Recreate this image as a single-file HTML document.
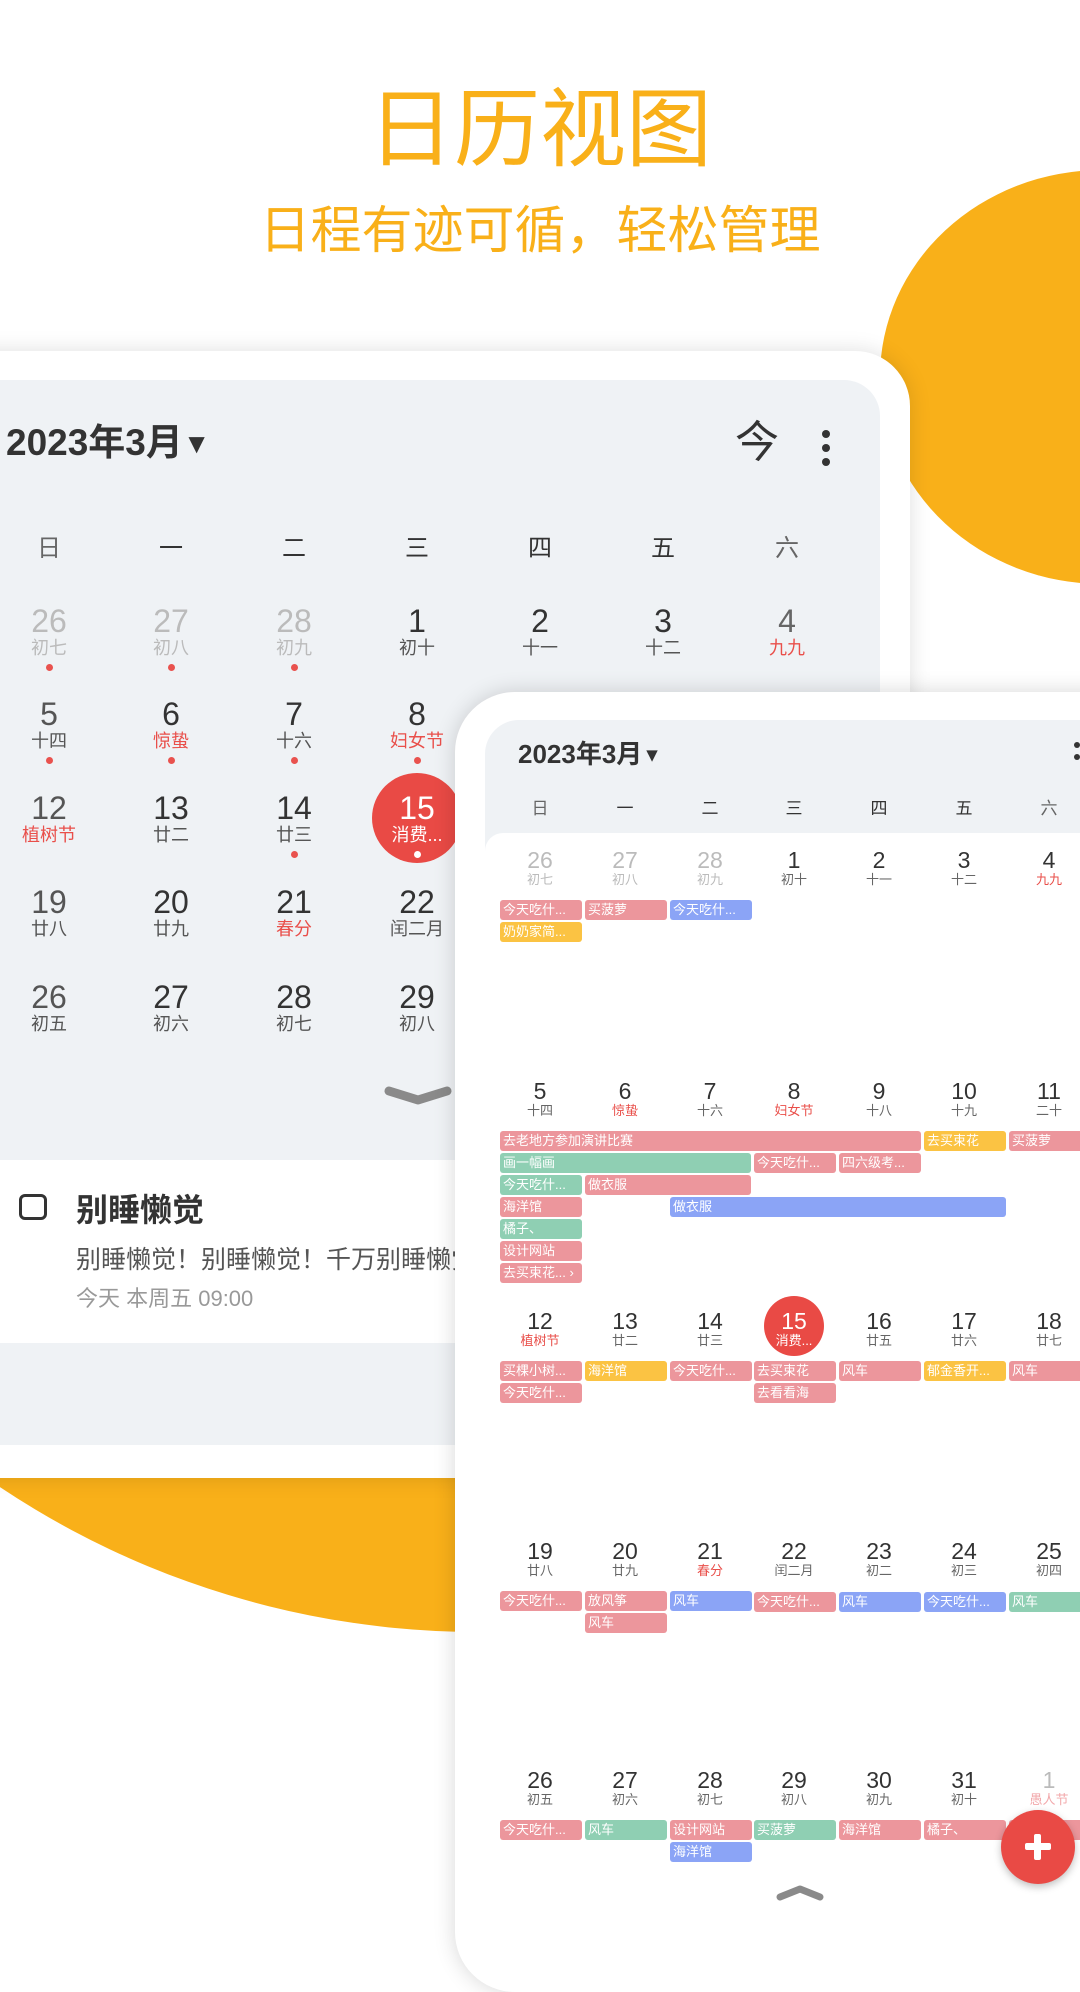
<!DOCTYPE html>
<html><head><meta charset="utf-8">
<style>
*{margin:0;padding:0;box-sizing:border-box}
body{width:1080px;height:1920px;position:relative;overflow:hidden;background:#fff;font-family:"Liberation Sans","Noto Sans CJK SC",sans-serif}
.a{position:absolute}
.t{position:absolute;text-align:center;white-space:nowrap}
.n1{font-size:32px;line-height:36px;width:120px;color:#333}
.l1{font-size:18px;line-height:22px;width:120px;color:#555}
.d1{width:7px;height:7px;border-radius:50%;background:#E9524E;position:absolute}
.w1{font-size:24px;line-height:30px;width:120px;color:#333}
.n2{font-size:23px;line-height:28px;width:84px;color:#333}
.l2{font-size:13px;line-height:16px;width:84px;color:#666}
.w2{font-size:17px;line-height:22px;width:84px;color:#333}
.g{color:#bbb!important}
.r{color:#E94F4A!important}
.b{position:absolute;height:20px;border-radius:3px;color:#fff;font-size:13px;line-height:20px;padding-left:3px;white-space:nowrap;overflow:hidden}
.p{background:#EC969C}.bl{background:#8BA4F6}.gr{background:#8FCFB3}.y{background:#FBC343}
.tri{font-size:0.75em;vertical-align:0.08em}
</style></head><body>

<div class="a" style="left:880px;top:170px;width:444px;height:414px;border-radius:50%;background:#F9B019"></div>
<div class="a" style="left:0;top:1470px;width:470px;height:200px;overflow:hidden">
 <div class="a" style="left:-383px;top:-1560px;width:1722px;height:1722px;border-radius:50%;background:#F9B019"></div>
</div>

<div class="t" style="left:0;width:1080px;top:80px;font-size:86px;line-height:100px;color:#F9B019">日历视图</div>
<div class="t" style="left:0;width:1080px;top:200px;font-size:51px;line-height:62px;color:#F9B019">日程有迹可循，轻松管理</div>

<!-- phone 1 -->
<div class="a" style="left:-60px;top:351px;width:970px;height:1127px;background:#fff;border-radius:0 55px 40px 0;box-shadow:0 0 22px rgba(0,0,0,.13)"></div>
<div class="a" style="left:-40px;top:380px;width:920px;height:1065px;background:#EFF2F5;border-radius:36px"></div>
<div class="a" style="left:6px;top:420px;font-size:37px;font-weight:bold;line-height:46px;color:#333">2023年3月<span class="tri">▼</span></div>
<div class="a" style="left:735px;top:418px;font-size:44px;line-height:50px;color:#333">今</div>
<div class="a" style="left:822px;top:430px;width:8px;height:8px;border-radius:50%;background:#333"></div>
<div class="a" style="left:822px;top:444px;width:8px;height:8px;border-radius:50%;background:#333"></div>
<div class="a" style="left:822px;top:458px;width:8px;height:8px;border-radius:50%;background:#333"></div>

<div class="t w1" style="left:-11px;top:534px;color:#666">日</div>
<div class="t w1" style="left:111px;top:534px">一</div>
<div class="t w1" style="left:234px;top:534px">二</div>
<div class="t w1" style="left:357px;top:534px">三</div>
<div class="t w1" style="left:480px;top:534px">四</div>
<div class="t w1" style="left:603px;top:534px">五</div>
<div class="t w1" style="left:727px;top:534px;color:#666">六</div>

<div class="t n1 g" style="left:-11px;top:603px">26</div><div class="t l1 g" style="left:-11px;top:637px">初七</div><div class="d1" style="left:46px;top:664px"></div>
<div class="t n1 g" style="left:111px;top:603px">27</div><div class="t l1 g" style="left:111px;top:637px">初八</div><div class="d1" style="left:168px;top:664px"></div>
<div class="t n1 g" style="left:234px;top:603px">28</div><div class="t l1 g" style="left:234px;top:637px">初九</div><div class="d1" style="left:291px;top:664px"></div>
<div class="t n1" style="left:357px;top:603px">1</div><div class="t l1" style="left:357px;top:637px">初十</div>
<div class="t n1" style="left:480px;top:603px">2</div><div class="t l1" style="left:480px;top:637px">十一</div>
<div class="t n1" style="left:603px;top:603px">3</div><div class="t l1" style="left:603px;top:637px">十二</div>
<div class="t n1" style="left:727px;top:603px;color:#666">4</div><div class="t l1 r" style="left:727px;top:637px">九九</div>
<div class="t n1" style="left:-11px;top:696px;color:#555">5</div><div class="t l1" style="left:-11px;top:730px">十四</div><div class="d1" style="left:46px;top:757px"></div>
<div class="t n1" style="left:111px;top:696px">6</div><div class="t l1 r" style="left:111px;top:730px">惊蛰</div><div class="d1" style="left:168px;top:757px"></div>
<div class="t n1" style="left:234px;top:696px">7</div><div class="t l1" style="left:234px;top:730px">十六</div><div class="d1" style="left:291px;top:757px"></div>
<div class="t n1" style="left:357px;top:696px">8</div><div class="t l1 r" style="left:357px;top:730px">妇女节</div><div class="d1" style="left:414px;top:757px"></div>
<div class="t n1" style="left:-11px;top:790px;color:#555">12</div><div class="t l1 r" style="left:-11px;top:824px">植树节</div>
<div class="t n1" style="left:111px;top:790px">13</div><div class="t l1" style="left:111px;top:824px">廿二</div>
<div class="t n1" style="left:234px;top:790px">14</div><div class="t l1" style="left:234px;top:824px">廿三</div><div class="d1" style="left:291px;top:851px"></div>
<div class="a" style="left:372px;top:773px;width:90px;height:90px;border-radius:50%;background:#E94A45"></div>
<div class="t n1" style="left:357px;top:790px;color:#fff">15</div><div class="t l1" style="left:357px;top:824px;color:#fff">消费...</div><div class="d1" style="left:414px;top:851px;background:#fff"></div>
<div class="t n1" style="left:-11px;top:884px;color:#555">19</div><div class="t l1" style="left:-11px;top:918px">廿八</div>
<div class="t n1" style="left:111px;top:884px">20</div><div class="t l1" style="left:111px;top:918px">廿九</div>
<div class="t n1" style="left:234px;top:884px">21</div><div class="t l1 r" style="left:234px;top:918px">春分</div>
<div class="t n1" style="left:357px;top:884px">22</div><div class="t l1" style="left:357px;top:918px">闰二月</div>
<div class="t n1" style="left:-11px;top:979px;color:#555">26</div><div class="t l1" style="left:-11px;top:1013px">初五</div>
<div class="t n1" style="left:111px;top:979px">27</div><div class="t l1" style="left:111px;top:1013px">初六</div>
<div class="t n1" style="left:234px;top:979px">28</div><div class="t l1" style="left:234px;top:1013px">初七</div>
<div class="t n1" style="left:357px;top:979px">29</div><div class="t l1" style="left:357px;top:1013px">初八</div>
<svg class="a" style="left:383px;top:1085px" width="70" height="24"><path d="M6 6 L35 15 L64 6" stroke="#8a8a8a" stroke-width="9" fill="none" stroke-linecap="round" stroke-linejoin="round"/></svg>

<div class="a" style="left:-30px;top:1160px;width:520px;height:183px;background:#fff;border-radius:28px"></div>
<div class="a" style="left:19px;top:1194px;width:28px;height:26px;border:3px solid #333;border-radius:6px"></div>
<div class="a" style="left:76px;top:1190px;font-size:32px;font-weight:bold;line-height:40px;color:#333">别睡懒觉</div>
<div class="a" style="left:76px;top:1244px;font-size:25px;line-height:32px;color:#555;white-space:nowrap">别睡懒觉！别睡懒觉！千万别睡懒觉</div>
<div class="a" style="left:76px;top:1285px;font-size:22px;line-height:28px;color:#999">今天 本周五 09:00</div>

<!-- phone 2 -->
<div class="a" style="left:455px;top:692px;width:700px;height:1300px;background:#fff;border-radius:60px;box-shadow:0 0 22px rgba(0,0,0,.16)"></div>
<div class="a" style="left:485px;top:720px;width:650px;height:160px;background:#EFF2F5;border-radius:34px 0 0 0"></div>
<div class="a" style="left:485px;top:833px;width:640px;height:1100px;background:#fff;border-radius:18px 0 0 0"></div>
<div class="a" style="left:518px;top:738px;font-size:26px;font-weight:bold;line-height:32px;color:#333">2023年3月<span class="tri">▼</span></div>
<div class="a" style="left:1074px;top:742px;width:6px;height:6px;border-radius:50%;background:#333"></div>
<div class="a" style="left:1074px;top:754px;width:6px;height:6px;border-radius:50%;background:#333"></div>

<div class="t w2" style="left:498px;top:798px;color:#666">日</div>
<div class="t w2" style="left:583px;top:798px">一</div>
<div class="t w2" style="left:668px;top:798px">二</div>
<div class="t w2" style="left:752px;top:798px">三</div>
<div class="t w2" style="left:837px;top:798px">四</div>
<div class="t w2" style="left:922px;top:798px">五</div>
<div class="t w2" style="left:1007px;top:798px;color:#666">六</div>

<div class="t n2 g" style="left:498px;top:846px">26</div><div class="t l2 g" style="left:498px;top:872px">初七</div>
<div class="t n2 g" style="left:583px;top:846px">27</div><div class="t l2 g" style="left:583px;top:872px">初八</div>
<div class="t n2 g" style="left:668px;top:846px">28</div><div class="t l2 g" style="left:668px;top:872px">初九</div>
<div class="t n2" style="left:752px;top:846px">1</div><div class="t l2" style="left:752px;top:872px">初十</div>
<div class="t n2" style="left:837px;top:846px">2</div><div class="t l2" style="left:837px;top:872px">十一</div>
<div class="t n2" style="left:922px;top:846px">3</div><div class="t l2" style="left:922px;top:872px">十二</div>
<div class="t n2" style="left:1007px;top:846px">4</div><div class="t l2 r" style="left:1007px;top:872px">九九</div>
<div class="b p" style="left:500px;top:900px;width:82px">今天吃什...</div>
<div class="b p" style="left:585px;top:900px;width:82px">买菠萝</div>
<div class="b bl" style="left:670px;top:900px;width:82px">今天吃什...</div>
<div class="b y" style="left:500px;top:922px;width:82px">奶奶家简...</div>

<div class="t n2" style="left:498px;top:1077px">5</div><div class="t l2" style="left:498px;top:1103px">十四</div>
<div class="t n2" style="left:583px;top:1077px">6</div><div class="t l2 r" style="left:583px;top:1103px">惊蛰</div>
<div class="t n2" style="left:668px;top:1077px">7</div><div class="t l2" style="left:668px;top:1103px">十六</div>
<div class="t n2" style="left:752px;top:1077px">8</div><div class="t l2 r" style="left:752px;top:1103px">妇女节</div>
<div class="t n2" style="left:837px;top:1077px">9</div><div class="t l2" style="left:837px;top:1103px">十八</div>
<div class="t n2" style="left:922px;top:1077px">10</div><div class="t l2" style="left:922px;top:1103px">十九</div>
<div class="t n2" style="left:1007px;top:1077px">11</div><div class="t l2" style="left:1007px;top:1103px">二十</div>
<div class="b p" style="left:500px;top:1131px;width:421px">去老地方参加演讲比赛</div>
<div class="b y" style="left:924px;top:1131px;width:82px">去买束花</div>
<div class="b p" style="left:1009px;top:1131px;width:82px">买菠萝</div>
<div class="b gr" style="left:500px;top:1153px;width:251px">画一幅画</div>
<div class="b p" style="left:754px;top:1153px;width:82px">今天吃什...</div>
<div class="b p" style="left:839px;top:1153px;width:82px">四六级考...</div>
<div class="b gr" style="left:500px;top:1175px;width:82px">今天吃什...</div>
<div class="b p" style="left:585px;top:1175px;width:166px">做衣服</div>
<div class="b p" style="left:500px;top:1197px;width:82px">海洋馆</div>
<div class="b bl" style="left:670px;top:1197px;width:336px">做衣服</div>
<div class="b gr" style="left:500px;top:1219px;width:82px">橘子、</div>
<div class="b p" style="left:500px;top:1241px;width:82px">设计网站</div>
<div class="b p" style="left:500px;top:1263px;width:82px">去买束花... ›</div>

<div class="t n2" style="left:498px;top:1307px">12</div><div class="t l2 r" style="left:498px;top:1333px">植树节</div>
<div class="t n2" style="left:583px;top:1307px">13</div><div class="t l2" style="left:583px;top:1333px">廿二</div>
<div class="t n2" style="left:668px;top:1307px">14</div><div class="t l2" style="left:668px;top:1333px">廿三</div>
<div class="a" style="left:764px;top:1296px;width:60px;height:60px;border-radius:50%;background:#E94A45"></div>
<div class="t n2" style="left:752px;top:1307px;color:#fff">15</div><div class="t l2" style="left:752px;top:1333px;color:#fff">消费...</div>
<div class="t n2" style="left:837px;top:1307px">16</div><div class="t l2" style="left:837px;top:1333px">廿五</div>
<div class="t n2" style="left:922px;top:1307px">17</div><div class="t l2" style="left:922px;top:1333px">廿六</div>
<div class="t n2" style="left:1007px;top:1307px">18</div><div class="t l2" style="left:1007px;top:1333px">廿七</div>
<div class="b p" style="left:500px;top:1361px;width:82px">买棵小树...</div>
<div class="b y" style="left:585px;top:1361px;width:82px">海洋馆</div>
<div class="b p" style="left:670px;top:1361px;width:82px">今天吃什...</div>
<div class="b p" style="left:754px;top:1361px;width:82px">去买束花</div>
<div class="b p" style="left:839px;top:1361px;width:82px">风车</div>
<div class="b y" style="left:924px;top:1361px;width:82px">郁金香开...</div>
<div class="b p" style="left:1009px;top:1361px;width:82px">风车</div>
<div class="b p" style="left:500px;top:1383px;width:82px">今天吃什...</div>
<div class="b p" style="left:754px;top:1383px;width:82px">去看看海</div>

<div class="t n2" style="left:498px;top:1537px">19</div><div class="t l2" style="left:498px;top:1563px">廿八</div>
<div class="t n2" style="left:583px;top:1537px">20</div><div class="t l2" style="left:583px;top:1563px">廿九</div>
<div class="t n2" style="left:668px;top:1537px">21</div><div class="t l2 r" style="left:668px;top:1563px">春分</div>
<div class="t n2" style="left:752px;top:1537px">22</div><div class="t l2" style="left:752px;top:1563px">闰二月</div>
<div class="t n2" style="left:837px;top:1537px">23</div><div class="t l2" style="left:837px;top:1563px">初二</div>
<div class="t n2" style="left:922px;top:1537px">24</div><div class="t l2" style="left:922px;top:1563px">初三</div>
<div class="t n2" style="left:1007px;top:1537px">25</div><div class="t l2" style="left:1007px;top:1563px">初四</div>
<div class="b p" style="left:500px;top:1591px;width:82px">今天吃什...</div>
<div class="b p" style="left:585px;top:1591px;width:82px">放风筝</div>
<div class="b bl" style="left:670px;top:1591px;width:82px">风车</div>
<div class="b p" style="left:754px;top:1592px;width:82px">今天吃什...</div>
<div class="b bl" style="left:839px;top:1592px;width:82px">风车</div>
<div class="b bl" style="left:924px;top:1592px;width:82px">今天吃什...</div>
<div class="b gr" style="left:1009px;top:1592px;width:82px">风车</div>
<div class="b p" style="left:585px;top:1613px;width:82px">风车</div>

<div class="t n2" style="left:498px;top:1766px">26</div><div class="t l2" style="left:498px;top:1792px">初五</div>
<div class="t n2" style="left:583px;top:1766px">27</div><div class="t l2" style="left:583px;top:1792px">初六</div>
<div class="t n2" style="left:668px;top:1766px">28</div><div class="t l2" style="left:668px;top:1792px">初七</div>
<div class="t n2" style="left:752px;top:1766px">29</div><div class="t l2" style="left:752px;top:1792px">初八</div>
<div class="t n2" style="left:837px;top:1766px">30</div><div class="t l2" style="left:837px;top:1792px">初九</div>
<div class="t n2" style="left:922px;top:1766px">31</div><div class="t l2" style="left:922px;top:1792px">初十</div>
<div class="t n2 g" style="left:1007px;top:1766px">1</div><div class="t l2" style="left:1007px;top:1792px;color:#F2A8AB">愚人节</div>
<div class="b p" style="left:500px;top:1820px;width:82px">今天吃什...</div>
<div class="b gr" style="left:585px;top:1820px;width:82px">风车</div>
<div class="b p" style="left:670px;top:1820px;width:82px">设计网站</div>
<div class="b gr" style="left:754px;top:1820px;width:82px">买菠萝</div>
<div class="b p" style="left:839px;top:1820px;width:82px">海洋馆</div>
<div class="b p" style="left:924px;top:1820px;width:82px">橘子、</div>
<div class="b p" style="left:1009px;top:1820px;width:82px"></div>
<div class="b bl" style="left:670px;top:1842px;width:82px">海洋馆</div>

<div class="a" style="left:1001px;top:1810px;width:74px;height:74px;border-radius:50%;background:#E94A45;box-shadow:0 3px 8px rgba(0,0,0,.25)"></div>
<div class="a" style="left:1025px;top:1843px;width:26px;height:7px;background:#fff;border-radius:2px"></div>
<div class="a" style="left:1034px;top:1834px;width:7px;height:26px;background:#fff;border-radius:2px"></div>
<svg class="a" style="left:775px;top:1882px" width="50" height="20"><path d="M5 15 L25 7 L45 15" stroke="#8a8a8a" stroke-width="7" fill="none" stroke-linecap="round" stroke-linejoin="round"/></svg>

</body></html>
